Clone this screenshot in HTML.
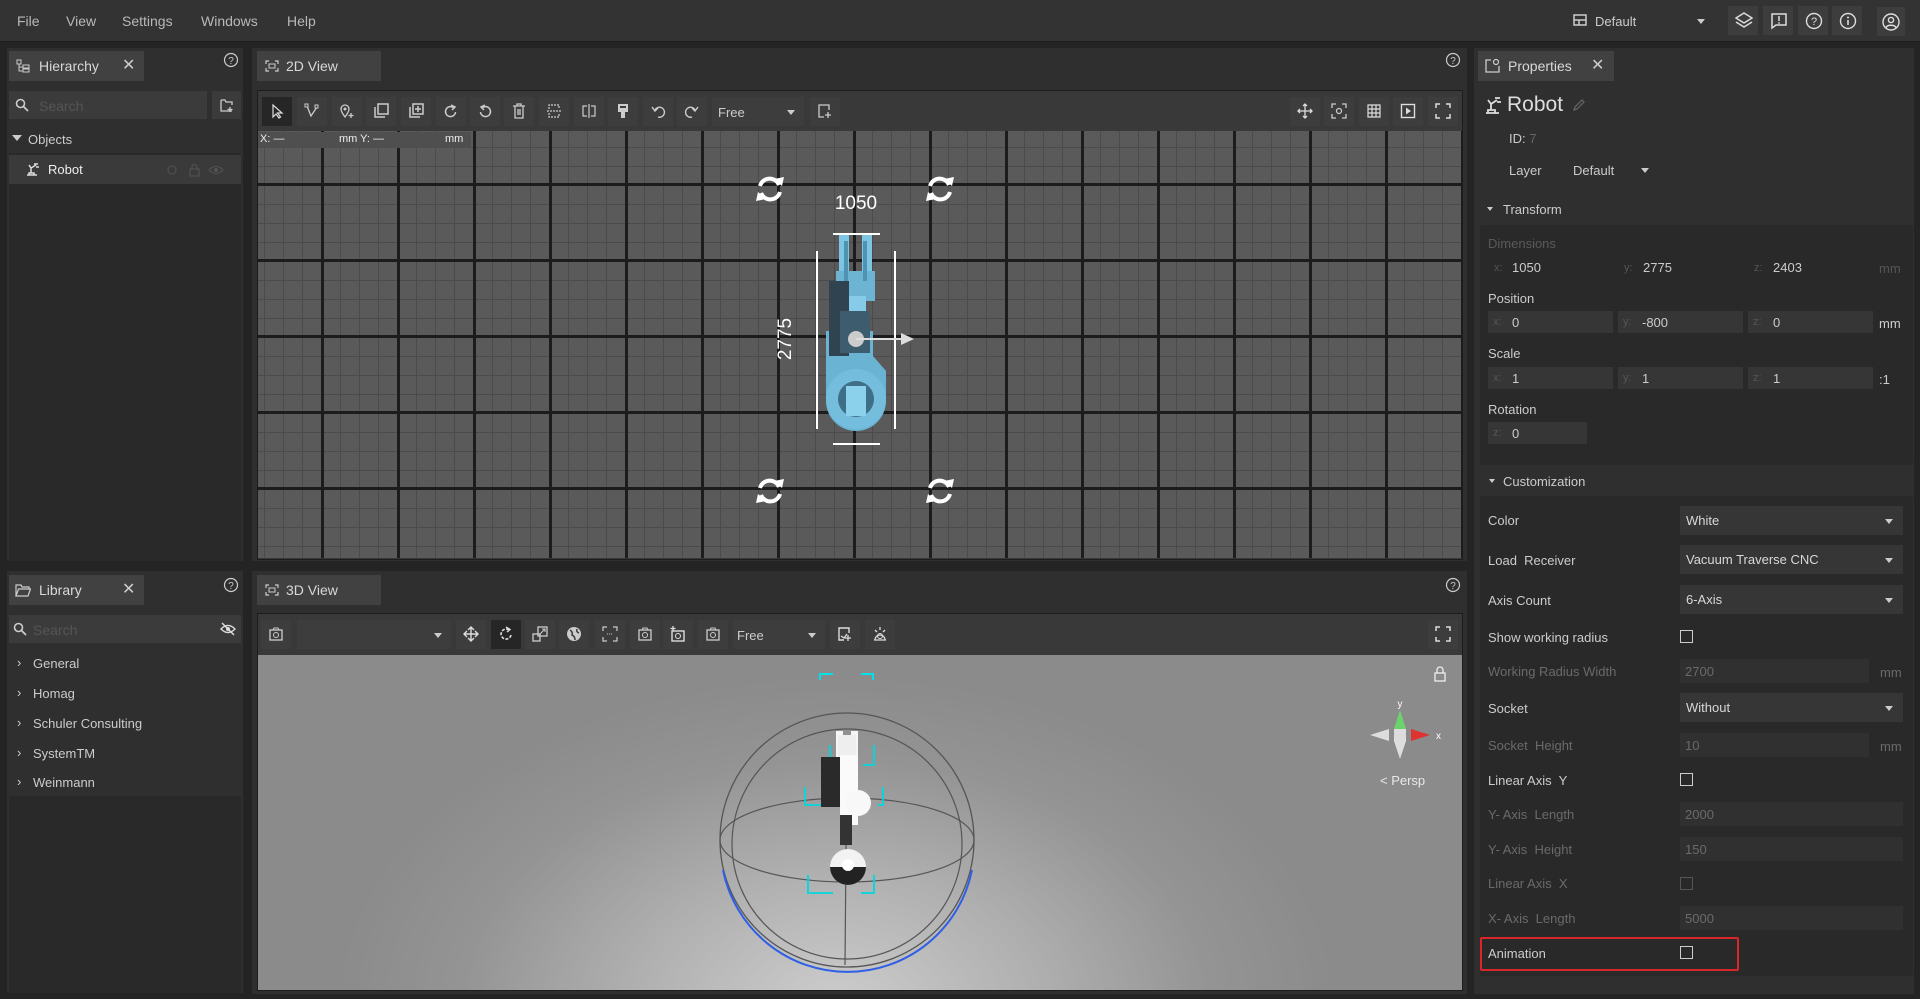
<!DOCTYPE html>
<html><head><meta charset="utf-8">
<style>
*{box-sizing:border-box;margin:0;padding:0}
body{width:1920px;height:999px;background:#242424;font-family:"Liberation Sans",sans-serif;color:#d4d4d4;position:relative;overflow:hidden;font-size:13px}
.a{position:absolute}
.menu{left:0;top:0;width:1920px;height:42px;background:#333;border-bottom:1px solid #1e1e1e}
.menu span{position:absolute;top:13px;font-size:14px;color:#b8b8b8}
.panel{background:#2f2f2f}
.tab{background:#414141;height:30px;font-size:14px;color:#d8d8d8;line-height:30px}
.btn{background:#3d3d3d;width:30px;height:29px}
.btn svg{position:absolute;left:7px;top:6px}
.t{position:absolute;white-space:nowrap}
.inp{position:absolute;background:#363636;height:22px}
.lbl{color:#555;font-size:11px}
.dd{position:absolute;background:#363636;height:29px;left:1680px;width:223px;font-size:13px;color:#d8d8d8;padding-left:6px;line-height:29px}
.dd:after{content:"";position:absolute;right:10px;top:13px;border:4px solid transparent;border-top:5px solid #ccc}
.cb{position:absolute;left:1680px;width:13px;height:13px;border:1.5px solid #ccc}
.dis{color:#6a6a6a}
</style></head><body>

<div class="a menu">
<span style="left:17px">File</span><span style="left:66px">View</span><span style="left:122px">Settings</span><span style="left:201px">Windows</span><span style="left:287px">Help</span>
<svg class="a" style="left:1573px;top:14px" width="14" height="12"><rect x="1" y="1" width="12" height="10" fill="none" stroke="#ccc" stroke-width="1.5"/><line x1="1" y1="6" x2="13" y2="6" stroke="#ccc" stroke-width="1.5"/><line x1="6" y1="6" x2="6" y2="11" stroke="#ccc" stroke-width="1.5"/></svg>
<span style="left:1595px;color:#ccc;font-size:13px;top:14px">Default</span>
<div class="a" style="left:1697px;top:19px;border:4px solid transparent;border-top:5px solid #ccc"></div>
<div class="a btn" style="left:1728px;top:6px"><svg width="18" height="18"><path d="M9 1L17 6 9 11 1 6Z M1 10L9 15 17 10" fill="none" stroke="#ddd" stroke-width="1.5"/></svg></div>
<div class="a btn" style="left:1763px;top:6px"><svg width="18" height="18"><path d="M2 2H16V13H6L2 16Z" fill="none" stroke="#ddd" stroke-width="1.5"/><line x1="9" y1="4" x2="9" y2="9" stroke="#ddd" stroke-width="1.5"/><circle cx="9" cy="11" r=".9" fill="#ddd"/></svg></div>
<div class="a btn" style="left:1798px;top:6px"><svg width="18" height="18"><circle cx="9" cy="9" r="7.5" fill="none" stroke="#ddd" stroke-width="1.4"/><text x="9" y="13" font-size="11" text-anchor="middle" fill="#ddd" font-family="Liberation Sans">?</text></svg></div>
<div class="a btn" style="left:1832px;top:6px"><svg width="18" height="18"><circle cx="9" cy="9" r="7.5" fill="none" stroke="#ddd" stroke-width="1.4"/><line x1="9" y1="8" x2="9" y2="13" stroke="#ddd" stroke-width="1.6"/><circle cx="9" cy="5.5" r="1" fill="#ddd"/></svg></div>
<div class="a btn" style="left:1877px;top:7px;width:28px"><svg width="18" height="18" style="left:5px"><circle cx="9" cy="9" r="8" fill="none" stroke="#ddd" stroke-width="1.4"/><circle cx="9" cy="7" r="2.6" fill="none" stroke="#ddd" stroke-width="1.4"/><path d="M4 14.5C5.5 11.5 12.5 11.5 14 14.5" fill="none" stroke="#ddd" stroke-width="1.4"/></svg></div>
</div>

<!-- Hierarchy -->
<div class="a panel" style="left:7px;top:48px;width:236px;height:513px"></div>
<div class="a tab" style="left:9px;top:51px;width:135px"><svg class="a" style="left:7px;top:8px" width="14" height="14"><rect x="1" y="1" width="4" height="4" fill="none" stroke="#ccc"/><rect x="7" y="6" width="6" height="3" fill="none" stroke="#ccc"/><rect x="7" y="10" width="6" height="3" fill="none" stroke="#ccc"/><path d="M3 5V12H7M3 8H7" fill="none" stroke="#ccc"/></svg><span class="t" style="left:30px">Hierarchy</span><span class="t" style="left:113px;font-size:16px;color:#ccc">✕</span></div>
<svg class="a" style="left:223px;top:52px" width="16" height="16"><circle cx="8" cy="8" r="6.5" fill="none" stroke="#ccc" stroke-width="1.2"/><text x="8" y="12" font-size="10" text-anchor="middle" fill="#ccc" font-family="Liberation Sans">?</text></svg>
<div class="a" style="left:9px;top:91px;width:198px;height:28px;background:#3b3b3b"><svg class="a" style="left:6px;top:7px" width="14" height="14"><circle cx="5.5" cy="5.5" r="4" fill="none" stroke="#ccc" stroke-width="1.6"/><line x1="8.5" y1="8.5" x2="13" y2="13" stroke="#ccc" stroke-width="1.8"/></svg><span class="t" style="left:30px;top:7px;color:#555;font-size:14px">Search</span></div>
<div class="a" style="left:212px;top:91px;width:29px;height:28px;background:#3b3b3b"><svg class="a" style="left:8px;top:8px" width="14" height="13"><path d="M1 1H5L6 3H12V6M12 12H1V1" fill="none" stroke="#ccc" stroke-width="1.3"/><path d="M10 8V13M7.5 10.5H12.5" stroke="#ccc" stroke-width="1.3"/></svg></div>
<div class="a" style="left:9px;top:153px;width:232px;height:408px;background:#292929"></div>
<div class="a" style="left:12px;top:135px;border:5px solid transparent;border-top:6px solid #ccc"></div>
<span class="t" style="left:28px;top:132px;color:#ccc;font-size:13px">Objects</span>
<div class="a" style="left:9px;top:155px;width:232px;height:29px;background:#3a3a3a"></div>
<svg class="a" style="left:26px;top:162px" width="14" height="14"><path d="M1 13H11M3 13V11H8V13M5 11L5 6 10 3M5 6L3 3M8 2L12 2M10 5H13" fill="none" stroke="#ddd" stroke-width="1.5"/></svg>
<span class="t" style="left:48px;top:162px;font-size:13px;color:#eee">Robot</span>
<svg class="a" style="left:165px;top:163px" width="60" height="14"><circle cx="7" cy="7" r="4" fill="none" stroke="#555"/><rect x="25" y="6" width="9" height="7" fill="none" stroke="#555"/><path d="M27 6V4A2.5 2.5 0 0 1 32 4V6" fill="none" stroke="#555"/><path d="M44 7Q51 0 58 7Q51 14 44 7Z" fill="none" stroke="#555"/><circle cx="51" cy="7" r="2" fill="#555"/></svg>

<!-- Library -->
<div class="a panel" style="left:7px;top:571px;width:236px;height:422px"></div>
<div class="a tab" style="left:9px;top:575px;width:135px"><svg class="a" style="left:6px;top:9px" width="16" height="13"><path d="M1 12V1H6L7 3H14V5M1 12L3.5 5H15.5L13 12Z" fill="none" stroke="#ccc" stroke-width="1.2"/></svg><span class="t" style="left:30px">Library</span><span class="t" style="left:113px;font-size:16px;color:#ccc">✕</span></div>
<svg class="a" style="left:223px;top:577px" width="16" height="16"><circle cx="8" cy="8" r="6.5" fill="none" stroke="#ccc" stroke-width="1.2"/><text x="8" y="12" font-size="10" text-anchor="middle" fill="#ccc" font-family="Liberation Sans">?</text></svg>
<div class="a" style="left:9px;top:615px;width:232px;height:28px;background:#3b3b3b"><svg class="a" style="left:4px;top:7px" width="14" height="14"><circle cx="5.5" cy="5.5" r="4" fill="none" stroke="#ccc" stroke-width="1.6"/><line x1="8.5" y1="8.5" x2="13" y2="13" stroke="#ccc" stroke-width="1.8"/></svg><span class="t" style="left:24px;top:7px;color:#555;font-size:14px">Search</span><svg class="a" style="left:211px;top:6px" width="16" height="16"><path d="M1 8Q8 1 15 8Q8 15 1 8Z" fill="none" stroke="#ddd" stroke-width="1.3"/><circle cx="8" cy="8" r="2" fill="#ddd"/><line x1="2" y1="2" x2="14" y2="14" stroke="#ddd" stroke-width="1.5"/></svg></div>
<div class="a" style="left:9px;top:796px;width:232px;height:197px;background:#292929"></div>
<div style="font-size:13px;color:#ccc">
<span class="t" style="left:17px;top:655px">›</span><span class="t" style="left:33px;top:656px">General</span>
<span class="t" style="left:17px;top:685px">›</span><span class="t" style="left:33px;top:686px">Homag</span>
<span class="t" style="left:17px;top:715px">›</span><span class="t" style="left:33px;top:716px">Schuler Consulting</span>
<span class="t" style="left:17px;top:745px">›</span><span class="t" style="left:33px;top:746px">SystemTM</span>
<span class="t" style="left:17px;top:774px">›</span><span class="t" style="left:33px;top:775px">Weinmann</span>
</div>

<!-- 2D View -->
<div class="a panel" style="left:252px;top:48px;width:1215px;height:513px"></div>
<div class="a tab" style="left:257px;top:51px;width:124px"><svg class="a" style="left:8px;top:9px" width="14" height="12"><path d="M1 4V1H4M10 1H13V4M13 8V11H10M4 11H1V8" fill="none" stroke="#ccc" stroke-width="1.2"/><rect x="4" y="4" width="6" height="4" fill="none" stroke="#ccc"/></svg><span class="t" style="left:29px">2D View</span></div>
<svg class="a" style="left:1445px;top:52px" width="16" height="16"><circle cx="8" cy="8" r="6.5" fill="none" stroke="#ccc" stroke-width="1.2"/><text x="8" y="12" font-size="10" text-anchor="middle" fill="#ccc" font-family="Liberation Sans">?</text></svg>
<div class="a" style="left:257px;top:90px;width:1206px;height:470px;background:#393939;border:1px solid #1c1c1c"></div>
<div class="a btn" style="left:262px;top:97px;background:#262626"><svg width="16" height="16"><path d="M4 2L4 14 7 11 10 15 11.5 14 8.5 10 13 10Z" fill="none" stroke="#ddd" stroke-width="1.2"/></svg></div>
<div class="a btn" style="left:297px;top:97px"><svg width="16" height="16"><path d="M3 3L7 13 13 4" fill="none" stroke="#ccc" stroke-width="1.3"/><rect x="1" y="1" width="3" height="3" fill="#3d3d3d" stroke="#ccc"/><rect x="11" y="2" width="3" height="3" fill="#3d3d3d" stroke="#ccc"/></svg></div>
<div class="a btn" style="left:332px;top:97px"><svg width="16" height="16"><path d="M6 14C3 10 2 8 2 6A4 4 0 0 1 10 6C10 8 9 10 6 14Z" fill="none" stroke="#ccc" stroke-width="1.3"/><circle cx="6" cy="6" r="1.5" fill="#ccc"/><path d="M12 10V15M9.5 12.5H14.5" stroke="#ccc" stroke-width="1.3"/></svg></div>
<div class="a btn" style="left:366px;top:97px"><svg width="16" height="16"><rect x="5" y="1" width="10" height="10" fill="none" stroke="#ccc" stroke-width="1.5"/><path d="M2 4V14H12" fill="none" stroke="#ccc" stroke-width="1.5"/></svg></div>
<div class="a btn" style="left:401px;top:97px"><svg width="16" height="16"><rect x="5" y="1" width="10" height="10" fill="none" stroke="#ccc" stroke-width="1.5"/><path d="M2 4V14H12M10 3V9M7 6H13" fill="none" stroke="#ccc" stroke-width="1.5"/></svg></div>
<div class="a btn" style="left:436px;top:97px"><svg width="16" height="16"><path d="M11 5A5 5 0 1 0 12.5 9" fill="none" stroke="#ccc" stroke-width="1.5"/><path d="M8 2L12 4 9 7" fill="none" stroke="#ccc" stroke-width="1.5"/></svg></div>
<div class="a btn" style="left:470px;top:97px"><svg width="16" height="16"><path d="M5 5A5 5 0 1 1 3.5 9" fill="none" stroke="#ccc" stroke-width="1.5"/><path d="M8 2L4 4 7 7" fill="none" stroke="#ccc" stroke-width="1.5"/></svg></div>
<div class="a btn" style="left:504px;top:97px"><svg width="16" height="16"><path d="M2 3H14M6 3V1H10V3M4 3V15H12V3M7 6V12M9 6V12" fill="none" stroke="#ccc" stroke-width="1.3"/></svg></div>
<div class="a btn" style="left:539px;top:97px"><svg width="16" height="16"><path d="M1 8H15M3 6V2H13V6M3 10V14H13V10" fill="none" stroke="#ccc" stroke-width="1.2" stroke-dasharray="2 1"/></svg></div>
<div class="a btn" style="left:574px;top:97px"><svg width="16" height="16"><path d="M8 1V15M6 3H2V13H6M10 3H14V13H10" fill="none" stroke="#ccc" stroke-width="1.2"/></svg></div>
<div class="a btn" style="left:608px;top:97px"><svg width="16" height="16"><path d="M3 1H13V9H3Z M6 9V15H10V9" fill="#ccc"/><rect x="5" y="3" width="6" height="2" fill="#3d3d3d"/></svg></div>
<div class="a btn" style="left:643px;top:97px"><svg width="16" height="16"><path d="M5 7A5 5 0 1 1 8 14" fill="none" stroke="#ccc" stroke-width="1.4"/><path d="M2 4L5 8 8 5" fill="none" stroke="#ccc" stroke-width="1.4"/></svg></div>
<div class="a btn" style="left:677px;top:97px"><svg width="16" height="16"><path d="M11 7A5 5 0 1 0 8 14" fill="none" stroke="#ccc" stroke-width="1.4"/><path d="M14 4L11 8 8 5" fill="none" stroke="#ccc" stroke-width="1.4"/></svg></div>
<div class="a" style="left:712px;top:97px;width:92px;height:29px;background:#3d3d3d"><span class="t" style="left:6px;top:8px;color:#ccc">Free</span><div class="a" style="left:75px;top:13px;border:4px solid transparent;border-top:5px solid #ccc"></div></div>
<div class="a btn" style="left:810px;top:97px"><svg width="16" height="16"><path d="M12 7V2H2V14H7" fill="none" stroke="#ccc" stroke-width="1.3"/><path d="M11 9V15M8 12H14" stroke="#ccc" stroke-width="1.3"/></svg></div>
<div class="a btn" style="left:1290px;top:97px"><svg width="16" height="16"><path d="M8 1V15M1 8H15M6 3L8 1 10 3M6 13L8 15 10 13M3 6L1 8 3 10M13 6L15 8 13 10" fill="none" stroke="#ddd" stroke-width="1.3"/></svg></div>
<div class="a btn" style="left:1324px;top:97px"><svg width="16" height="16"><path d="M1 5V1H5M11 1H15V5M15 11V15H11M5 15H1V11" fill="none" stroke="#ccc" stroke-width="1.3"/><circle cx="8" cy="8" r="2.5" fill="none" stroke="#ccc" stroke-width="1.2"/></svg></div>
<div class="a btn" style="left:1359px;top:97px"><svg width="16" height="16"><path d="M2 2H14V14H2ZM2 6H14M2 10H14M6 2V14M10 2V14" fill="none" stroke="#ddd" stroke-width="1.2"/></svg></div>
<div class="a btn" style="left:1393px;top:97px"><svg width="16" height="16"><rect x="1.5" y="1.5" width="13" height="13" fill="none" stroke="#ddd" stroke-width="1.4"/><path d="M6 4.5V11.5L11 8Z" fill="#ddd"/></svg></div>
<div class="a btn" style="left:1428px;top:97px"><svg width="16" height="16"><path d="M1 5V1H5M11 1H15V5M15 11V15H11M5 15H1V11" fill="none" stroke="#ddd" stroke-width="1.5"/></svg></div>

<div class="a" style="left:258px;top:131px;width:1204px;height:427px;background-color:#5a5a5a;
background-image:
linear-gradient(90deg,#1c1c1c 0 3px,transparent 3px),
linear-gradient(0deg,#1c1c1c 0 3px,transparent 3px),
linear-gradient(90deg,#4b4b4b 0 1px,transparent 1px),
linear-gradient(0deg,#4b4b4b 0 1px,transparent 1px);
background-size:76px 76px,76px 76px,19px 19px,19px 19px;
background-position:63px 0,0 55px,6px 0,0 17px"></div>
<div class="a" style="left:258px;top:132px;width:213px;height:16px;background:#4f4f4f;font-size:11px;color:#eee"><span class="t" style="left:2px;top:1px">X: —</span><span class="t" style="left:81px;top:1px">mm Y: —</span><span class="t" style="left:187px;top:1px">mm</span></div>

<svg class="a" style="left:258px;top:131px" width="1204" height="427">
<defs><g id="rot"><path d="M-10 -3A10 10 0 0 1 9 -4" fill="none" stroke="#fff" stroke-width="4"/><path d="M10 3A10 10 0 0 1 -9 4" fill="none" stroke="#fff" stroke-width="4"/><path d="M4 -10L12 -3 14 -12Z" fill="#fff"/><path d="M-4 10L-12 3 -14 12Z" fill="#fff"/></g></defs>
<use href="#rot" x="512" y="58"/><use href="#rot" x="682" y="58"/><use href="#rot" x="512" y="360"/><use href="#rot" x="682" y="360"/>
<text x="598" y="78" font-size="19" fill="#fff" text-anchor="middle" font-family="Liberation Sans">1050</text>
<text transform="translate(533 208) rotate(-90)" font-size="19" fill="#fff" text-anchor="middle" font-family="Liberation Sans">2775</text>
<line x1="575" y1="103" x2="622" y2="103" stroke="#fff" stroke-width="2"/>
<line x1="575" y1="313" x2="622" y2="313" stroke="#fff" stroke-width="2"/>
<line x1="559" y1="120" x2="559" y2="298" stroke="#fff" stroke-width="2"/>
<line x1="637" y1="120" x2="637" y2="298" stroke="#fff" stroke-width="2"/>
<rect x="581" y="104" width="10" height="65" fill="#7cc6e4"/>
<rect x="604" y="104" width="10" height="65" fill="#7cc6e4"/>
<rect x="578" y="140" width="39" height="30" fill="#6cb4d2"/>
<rect x="586" y="110" width="4" height="40" fill="#4f93b2"/>
<rect x="605" y="110" width="4" height="40" fill="#4f93b2"/>
<rect x="590" y="165" width="18" height="40" fill="#86cce8"/>
<path d="M576 200H615V225L628 240V270A30 30 0 0 1 568 270V200Z" fill="#6ab3d3"/>
<rect x="571" y="150" width="20" height="75" fill="#2f4350"/>
<rect x="582" y="180" width="30" height="42" fill="#3d5c6d"/>
<circle cx="598" cy="268" r="30" fill="#74bddc"/>
<circle cx="598" cy="268" r="18" fill="#3f6f86"/>
<rect x="588" y="255" width="20" height="30" fill="#8bd1ec"/>
<circle cx="598" cy="208" r="8" fill="#ccc"/>
<line x1="598" y1="208" x2="645" y2="208" stroke="#ddd" stroke-width="2"/>
<path d="M643 202L656 208 643 214Z" fill="#ddd"/>
</svg>

<!-- 3D View -->
<div class="a panel" style="left:252px;top:571px;width:1215px;height:423px"></div>
<div class="a tab" style="left:257px;top:575px;width:124px"><svg class="a" style="left:8px;top:9px" width="14" height="12"><path d="M1 4V1H4M10 1H13V4M13 8V11H10M4 11H1V8" fill="none" stroke="#ccc" stroke-width="1.2"/><rect x="4" y="4" width="6" height="4" fill="none" stroke="#ccc"/></svg><span class="t" style="left:29px">3D View</span></div>
<svg class="a" style="left:1445px;top:577px" width="16" height="16"><circle cx="8" cy="8" r="6.5" fill="none" stroke="#ccc" stroke-width="1.2"/><text x="8" y="12" font-size="10" text-anchor="middle" fill="#ccc" font-family="Liberation Sans">?</text></svg>
<div class="a" style="left:257px;top:613px;width:1206px;height:378px;background:#393939;border:1px solid #1c1c1c"></div>
<div class="a btn" style="left:261px;top:620px"><svg width="16" height="16"><rect x="2" y="4" width="12" height="10" fill="none" stroke="#ccc" stroke-width="1.3"/><path d="M5 4L6 2H10L11 4" fill="none" stroke="#ccc"/><circle cx="8" cy="9" r="2.5" fill="none" stroke="#ccc"/></svg></div>
<div class="a" style="left:297px;top:620px;width:154px;height:29px;background:#3d3d3d"><div class="a" style="left:137px;top:13px;border:4px solid transparent;border-top:5px solid #ccc"></div></div>
<div class="a btn" style="left:456px;top:620px"><svg width="16" height="16"><path d="M8 1V15M1 8H15M5 4L8 1 11 4M5 12L8 15 11 12M4 5L1 8 4 11M12 5L15 8 12 11" fill="none" stroke="#ddd" stroke-width="1.4"/></svg></div>
<div class="a btn" style="left:491px;top:620px;background:#262626"><svg width="16" height="16"><path d="M11 4A5 5 0 1 0 13 9" fill="none" stroke="#ddd" stroke-width="1.6" stroke-dasharray="3 1.5"/><path d="M8 1L12 3.5 9 6" fill="none" stroke="#ddd" stroke-width="1.4"/></svg></div>
<div class="a btn" style="left:525px;top:620px"><svg width="16" height="16"><rect x="6" y="1" width="9" height="9" fill="none" stroke="#ccc" stroke-width="1.3"/><rect x="1" y="8" width="7" height="7" fill="none" stroke="#ccc" stroke-width="1.3"/><path d="M8 8L13 3M10 3H13V6" fill="none" stroke="#ccc"/></svg></div>
<div class="a btn" style="left:559px;top:620px"><svg width="16" height="16"><circle cx="8" cy="8" r="7" fill="#ccc"/><path d="M4 4Q7 6 6 9Q9 10 9 14M11 3Q10 6 13 7" fill="none" stroke="#3d3d3d" stroke-width="1.5"/></svg></div>
<div class="a btn" style="left:595px;top:620px"><svg width="16" height="16"><path d="M1 5V1H5M11 1H15V5M15 11V15H11M5 15H1V11" fill="none" stroke="#ccc" stroke-width="1.2"/><path d="M5 8H11" stroke="#ccc" stroke-dasharray="1 1"/></svg></div>
<div class="a btn" style="left:630px;top:620px"><svg width="16" height="16"><rect x="2" y="4" width="12" height="10" fill="none" stroke="#ccc" stroke-width="1.3"/><path d="M5 4L6 2H10L11 4" fill="none" stroke="#ccc"/><circle cx="8" cy="9" r="2.5" fill="none" stroke="#ccc"/></svg></div>
<div class="a btn" style="left:663px;top:620px"><svg width="16" height="16"><rect x="2" y="5" width="12" height="10" fill="none" stroke="#ddd" stroke-width="1.4"/><circle cx="8" cy="10" r="2.5" fill="none" stroke="#ddd"/><path d="M3 0V5M0.5 2.5H5.5" stroke="#ddd" stroke-width="1.3"/></svg></div>
<div class="a btn" style="left:698px;top:620px"><svg width="16" height="16"><rect x="2" y="4" width="12" height="10" fill="none" stroke="#ccc" stroke-width="1.3"/><path d="M5 4L6 2H10L11 4" fill="none" stroke="#ccc"/><circle cx="8" cy="9" r="2.5" fill="none" stroke="#ccc"/></svg></div>
<div class="a" style="left:733px;top:620px;width:92px;height:29px;background:#3d3d3d"><span class="t" style="left:4px;top:8px;color:#ccc">Free</span><div class="a" style="left:75px;top:13px;border:4px solid transparent;border-top:5px solid #ccc"></div></div>
<div class="a btn" style="left:830px;top:620px"><svg width="16" height="16"><path d="M12 7V2H2V14H7" fill="none" stroke="#ddd" stroke-width="1.4"/><path d="M11 9V15M8 12H14M4 10L7 12 10 8" fill="none" stroke="#ddd" stroke-width="1.3"/></svg></div>
<div class="a btn" style="left:865px;top:620px"><svg width="16" height="16"><path d="M2 14H14M3 14A5 5 0 0 1 13 14M8 1V4M3 4L5 6M13 4L11 6" fill="none" stroke="#ddd" stroke-width="1.3"/><circle cx="8" cy="10" r="2.5" fill="none" stroke="#ddd"/></svg></div>
<div class="a btn" style="left:1428px;top:620px"><svg width="16" height="16"><path d="M1 5V1H5M11 1H15V5M15 11V15H11M5 15H1V11" fill="none" stroke="#ddd" stroke-width="1.5"/></svg></div>

<div class="a" style="left:258px;top:655px;width:1204px;height:335px;background:radial-gradient(ellipse 500px 330px at 48% 105%,#cdcdcd 0%,#b0b0b0 40%,#949494 75%,#8b8b8b 100%)"></div>
<svg class="a" style="left:258px;top:655px" width="1204" height="335">
<g fill="none">
<circle cx="589" cy="185" r="127" stroke="#555" stroke-width="1.3"/>
<circle cx="589" cy="189" r="115" stroke="#555" stroke-width="1.2"/>
<ellipse cx="589" cy="185" rx="127" ry="42" stroke="#555" stroke-width="1.2"/>
<path d="M465 215A127 127 0 0 0 714 215" stroke="#2f5fe8" stroke-width="2"/>
<line x1="589" y1="80" x2="587" y2="310" stroke="#555" stroke-width="1.2"/>
<path d="M562 25V19H575M603 19H615V25" stroke="#00e0e8" stroke-width="2"/>
<path d="M572 90V110H590M605 110H616V90M547 132V150H564M620 150H625V132M550 220V238H575M603 238H616V220" stroke="#00d8e0" stroke-width="1.8"/>
</g>
<rect x="578" y="76" width="7" height="35" fill="#f5f5f5"/><rect x="593" y="76" width="7" height="35" fill="#f5f5f5"/>
<rect x="580" y="80" width="18" height="30" fill="#eee"/>
<rect x="563" y="102" width="26" height="50" fill="#2a2a2a"/>
<rect x="582" y="100" width="18" height="70" fill="#fafafa"/>
<circle cx="600" cy="148" r="13" fill="#f8f8f8"/>
<rect x="582" y="160" width="12" height="30" fill="#333"/>
<circle cx="590" cy="212" r="18" fill="#f2f2f2"/>
<path d="M572 212A18 18 0 0 0 608 212" fill="#222"/>
<circle cx="590" cy="210" r="6" fill="#fff"/>
<path d="M1142 55L1136 74H1148Z" fill="#6cd36c"/>
<path d="M1142 104L1136 86H1148Z" fill="#ddd"/>
<path d="M1172 80L1153 74V86Z" fill="#d33"/>
<path d="M1112 80L1131 74V86Z" fill="#ddd"/>
<rect x="1136" y="74" width="12" height="12" fill="#ddd"/>
<text x="1142" y="52" font-size="10" fill="#fff" text-anchor="middle" font-family="Liberation Sans">y</text>
<text x="1178" y="84" font-size="10" fill="#fff" font-family="Liberation Sans">x</text>
<text x="1122" y="130" font-size="13" fill="#e8e8e8" font-family="Liberation Sans">&lt; Persp</text>
<rect x="1177" y="18" width="10" height="8" fill="none" stroke="#eee" stroke-width="1.3"/><path d="M1179 18V15A3 3 0 0 1 1185 15V18" fill="none" stroke="#eee" stroke-width="1.3"/>
</svg>

<!-- Properties -->
<div class="a panel" style="left:1474px;top:48px;width:440px;height:946px"></div>
<div class="a tab" style="left:1478px;top:51px;width:136px"><svg class="a" style="left:7px;top:7px" width="15" height="15"><path d="M6 2H1V14H14V8" fill="none" stroke="#ccc" stroke-width="1.3"/><circle cx="11" cy="4" r="2.5" fill="none" stroke="#ccc" stroke-width="1.2"/></svg><span class="t" style="left:30px">Properties</span><span class="t" style="left:113px;font-size:16px;color:#ccc">✕</span></div>
<svg class="a" style="left:1485px;top:96px" width="18" height="18"><path d="M1 17H14M3 17V14H10V17M6 14L6 8 12 4M6 8L3 4M10 2L15 2M12 6H16" fill="none" stroke="#ddd" stroke-width="1.8"/></svg>
<span class="t" style="left:1507px;top:93px;font-size:21px;color:#ddd">Robot</span>
<svg class="a" style="left:1572px;top:98px" width="14" height="14"><path d="M2 12L3 9 10 2 12 4 5 11Z" fill="none" stroke="#666" stroke-width="1.2"/></svg>
<span class="t" style="left:1509px;top:131px;color:#ccc">ID: <span style="color:#666">7</span></span>
<span class="t" style="left:1509px;top:163px;color:#ccc">Layer</span>
<span class="t" style="left:1573px;top:163px;color:#ccc">Default</span>
<div class="a" style="left:1641px;top:168px;border:4px solid transparent;border-top:5px solid #ccc"></div>
<div class="a" style="left:1487px;top:207px;border:3.5px solid transparent;border-top:4.5px solid #ccc"></div>
<span class="t" style="left:1503px;top:202px;color:#ccc">Transform</span>

<div class="a" style="left:1480px;top:225px;width:433px;height:240px;background:#292929;border-radius:3px"></div>
<span class="t" style="left:1488px;top:236px;color:#5a5a5a">Dimensions</span>
<span class="t lbl" style="left:1494px;top:262px">x:</span><span class="t" style="left:1512px;top:260px;color:#ccc">1050</span>
<span class="t lbl" style="left:1624px;top:262px">y:</span><span class="t" style="left:1643px;top:260px;color:#ccc">2775</span>
<span class="t lbl" style="left:1754px;top:262px">z:</span><span class="t" style="left:1773px;top:260px;color:#ccc">2403</span>
<span class="t" style="left:1879px;top:261px;color:#555">mm</span>
<span class="t" style="left:1488px;top:291px;color:#ccc">Position</span>
<div class="inp" style="left:1488px;top:311px;width:125px"></div><div class="inp" style="left:1618px;top:311px;width:125px"></div><div class="inp" style="left:1748px;top:311px;width:125px"></div>
<span class="t lbl" style="left:1493px;top:316px">x:</span><span class="t" style="left:1512px;top:315px;color:#ccc">0</span>
<span class="t lbl" style="left:1623px;top:316px">y:</span><span class="t" style="left:1642px;top:315px;color:#ccc">-800</span>
<span class="t lbl" style="left:1753px;top:316px">z:</span><span class="t" style="left:1773px;top:315px;color:#ccc">0</span>
<span class="t" style="left:1879px;top:316px;color:#ccc">mm</span>
<span class="t" style="left:1488px;top:346px;color:#ccc">Scale</span>
<div class="inp" style="left:1488px;top:367px;width:125px"></div><div class="inp" style="left:1618px;top:367px;width:125px"></div><div class="inp" style="left:1748px;top:367px;width:125px"></div>
<span class="t lbl" style="left:1493px;top:372px">x:</span><span class="t" style="left:1512px;top:371px;color:#ccc">1</span>
<span class="t lbl" style="left:1623px;top:372px">y:</span><span class="t" style="left:1642px;top:371px;color:#ccc">1</span>
<span class="t lbl" style="left:1753px;top:372px">z:</span><span class="t" style="left:1773px;top:371px;color:#ccc">1</span>
<span class="t" style="left:1879px;top:372px;color:#ccc">:1</span>
<span class="t" style="left:1488px;top:402px;color:#ccc">Rotation</span>
<div class="inp" style="left:1488px;top:422px;width:99px"></div>
<span class="t lbl" style="left:1493px;top:427px">z:</span><span class="t" style="left:1512px;top:426px;color:#ccc">0</span>

<div class="a" style="left:1489px;top:479px;border:3.5px solid transparent;border-top:4.5px solid #ccc"></div>
<span class="t" style="left:1503px;top:474px;color:#ccc">Customization</span>
<div class="a" style="left:1480px;top:496px;width:433px;height:480px;background:#292929;border-radius:3px"></div>

<div style="color:#ccc;font-size:13px">
<span class="t" style="left:1488px;top:513px">Color</span><div class="dd" style="top:506px">White</div>
<span class="t" style="left:1488px;top:553px">Load&nbsp; Receiver</span><div class="dd" style="top:545px">Vacuum Traverse CNC</div>
<span class="t" style="left:1488px;top:593px">Axis Count</span><div class="dd" style="top:585px">6-Axis</div>
<span class="t" style="left:1488px;top:630px">Show working radius</span><div class="cb" style="top:630px"></div>
<span class="t dis" style="left:1488px;top:664px">Working Radius Width</span><div class="inp" style="left:1680px;top:659px;width:189px;height:24px;background:#303030"></div><span class="t dis" style="left:1685px;top:664px">2700</span><span class="t dis" style="left:1880px;top:665px">mm</span>
<span class="t" style="left:1488px;top:701px">Socket</span><div class="dd" style="top:693px">Without</div>
<span class="t dis" style="left:1488px;top:738px">Socket&nbsp; Height</span><div class="inp" style="left:1680px;top:733px;width:189px;height:24px;background:#303030"></div><span class="t dis" style="left:1685px;top:738px">10</span><span class="t dis" style="left:1880px;top:739px">mm</span>
<span class="t" style="left:1488px;top:773px">Linear Axis&nbsp; Y</span><div class="cb" style="top:773px"></div>
<span class="t dis" style="left:1488px;top:807px">Y- Axis&nbsp; Length</span><div class="inp" style="left:1680px;top:802px;width:223px;height:24px;background:#303030"></div><span class="t dis" style="left:1685px;top:807px">2000</span>
<span class="t dis" style="left:1488px;top:842px">Y- Axis&nbsp; Height</span><div class="inp" style="left:1680px;top:837px;width:223px;height:24px;background:#303030"></div><span class="t dis" style="left:1685px;top:842px">150</span>
<span class="t dis" style="left:1488px;top:876px">Linear Axis&nbsp; X</span><div class="cb" style="top:877px;border-color:#555"></div>
<span class="t dis" style="left:1488px;top:911px">X- Axis&nbsp; Length</span><div class="inp" style="left:1680px;top:906px;width:223px;height:24px;background:#303030"></div><span class="t dis" style="left:1685px;top:911px">5000</span>
<span class="t" style="left:1488px;top:946px">Animation</span><div class="cb" style="top:946px"></div>
</div>
<div class="a" style="left:1480px;top:937px;width:259px;height:34px;border:2.5px solid #d9262a;border-radius:2px"></div>

</body></html>
